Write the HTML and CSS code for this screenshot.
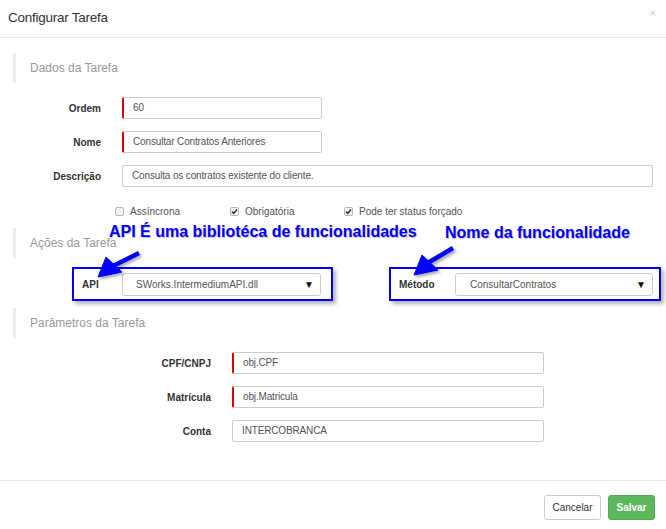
FILE: index.html
```html
<!DOCTYPE html>
<html>
<head>
<meta charset="utf-8">
<link rel="stylesheet" href="styles.css">
</head>
<body>
<div class="modal">
  <div class="modal-header">
    <span class="title">Configurar Tarefa</span>
    <span class="close">×</span>
  </div>
  <div class="modal-body">
    <div class="section s1">Dados da Tarefa</div>
    <div class="row first">
      <label class="lbl">Ordem</label>
      <div class="input req short">60</div>
    </div>
    <div class="row">
      <label class="lbl">Nome</label>
      <div class="input req short">Consultar Contratos Anteriores</div>
    </div>
    <div class="row">
      <label class="lbl">Descrição</label>
      <div class="input long">Consulta os contratos existente do cliente.</div>
    </div>
    <div class="checks">
      <span class="chk"><span class="box"></span>Assíncrona</span>
      <span class="chk c2"><span class="box on"><svg viewBox="0 0 9 9" width="9" height="9"><path d="M2 4.6 L3.8 6.4 L7 2.6" fill="none" stroke="#333" stroke-width="1.5"/></svg></span>Obrigatória</span>
      <span class="chk c3"><span class="box on"><svg viewBox="0 0 9 9" width="9" height="9"><path d="M2 4.6 L3.8 6.4 L7 2.6" fill="none" stroke="#333" stroke-width="1.5"/></svg></span>Pode ter status forçado</span>
    </div>
    <div class="section s2">Ações da Tarefa</div>
    <div class="boxes">
      <div class="hl hl1">
        <label class="blbl">API</label>
        <div class="select sel1"><span>SWorks.IntermediumAPI.dll</span><span class="caret">▼</span></div>
      </div>
      <div class="hl hl2">
        <label class="blbl">Método</label>
        <div class="select sel2"><span>ConsultarContratos</span><span class="caret">▼</span></div>
      </div>
    </div>
    <div class="section s3">Parâmetros da Tarefa</div>
    <div class="row prow first2">
      <label class="lbl plbl">CPF/CNPJ</label>
      <div class="input req mid">obj.CPF</div>
    </div>
    <div class="row prow">
      <label class="lbl plbl">Matrícula</label>
      <div class="input req mid">obj.Matricula</div>
    </div>
    <div class="row prow">
      <label class="lbl plbl">Conta</label>
      <div class="input mid">INTERCOBRANCA</div>
    </div>

    <div class="note n1">API É uma bibliotéca de funcionalidades</div>
    <div class="note n2">Nome da funcionalidade</div>
    <svg class="arrows" width="666" height="529" viewBox="0 0 666 529">
      <defs>
        <filter id="sh" x="-50%" y="-50%" width="200%" height="200%">
          <feDropShadow dx="2" dy="2" stdDeviation="1.5" flood-color="#000" flood-opacity="0.35"/>
        </filter>
      </defs>
      <g filter="url(#sh)" fill="#0000ff" stroke="#0000ff">
        <line x1="139" y1="253" x2="111" y2="267" stroke-width="4.5"/>
        <polygon points="98,277 106,257 122,272" stroke-width="1"/>
        <line x1="453" y1="248" x2="426" y2="264" stroke-width="4.5"/>
        <polygon points="414,275 422,255 438,270" stroke-width="1"/>
      </g>
    </svg>
  </div>
  <div class="modal-footer">
    <button class="btn cancel">Cancelar</button>
    <button class="btn save">Salvar</button>
  </div>
</div>
</body>
</html>
```
FILE: styles.css
```css
* { box-sizing: border-box; }
html, body { margin: 0; padding: 0; background: #fff; }
body { font-family: "Liberation Sans", Arial, sans-serif; color: #333; width: 666px; height: 529px; overflow: hidden; }
.modal { width: 666px; height: 529px; display: flex; flex-direction: column; }
.modal-header { height: 38px; border-bottom: 1px solid #e5e5e5; display: flex; align-items: center; justify-content: space-between; padding: 0 10px 3px 8px; }
.title { font-family: "Liberation Sans", Arial, sans-serif; font-size: 13.5px; letter-spacing: -0.25px; color: #333; }
.close { font-size: 11px; color: #c8c8c8; margin-top: -8px; }
.modal-body { position: relative; height: 442px; padding: 0 13px; display: flex; flex-direction: column; }
.section { height: 30px; line-height: 30px; border-left: 3px solid #eee; padding-left: 14px; font-size: 12px; color: #999; }
.s1 { margin-top: 15px; }
.s2 { margin-top: 11px; }
.s3 { margin-top: 7px; }
.row { display: flex; align-items: center; height: 22px; margin-top: 12px; }
.row.first { margin-top: 14px; }
.row.first2 { margin-top: 14px; }
.lbl { width: 109px; padding-right: 21px; text-align: right; font-size: 10px; font-weight: bold; color: #333; }
.plbl { width: 219px; }
.input { height: 22px; border: 1px solid #ccc; border-radius: 2px; font-size: 10px; letter-spacing: -0.15px; color: #555; padding: 0 9px; line-height: 20px; }
.input.req { border-left: 2px solid #d00; }
.short { width: 200px; }
.long { width: 531px; }
.mid { width: 312px; }
.checks { position: relative; height: 12px; margin-top: 18px; font-size: 10px; color: #555; }
.chk { position: absolute; top: 0; display: flex; align-items: center; height: 12px; }
.chk { left: 102px; }
.chk.c2 { left: 217px; }
.chk.c3 { left: 331px; }
.box { width: 9px; height: 9px; border: 1px solid #b5b5b5; border-radius: 2px; background: #f2f2f2; margin-right: 6px; display: inline-flex; }
.box svg { margin: -1px; }
.boxes { height: 34px; margin-top: 9px; display: flex; }
.hl { flex-shrink: 0; border: 2px solid #0000ff; height: 34px; display: flex; align-items: center; box-shadow: 3px 3px 4px rgba(0,0,0,0.3); }
.hl1 { margin-left: 59px; width: 261px; padding-left: 8px; }
.hl2 { margin-left: 56px; width: 272px; padding-left: 8px; }
.blbl { flex-shrink: 0; font-size: 10px; font-weight: bold; color: #333; }
.hl1 .blbl { width: 40px; }
.hl2 .blbl { width: 56px; }
.select { flex-shrink: 0; height: 23px; border: 1px solid #ccc; border-radius: 3px; display: flex; align-items: center; justify-content: space-between; padding: 0 6px 0 13px; font-size: 10px; color: #555; }
.sel1 { width: 199px; }
.sel2 { width: 198px; padding-left: 14px; }
.caret { font-size: 10px; color: #111; }
.note { position: absolute; font-weight: bold; font-size: 16px; color: #0000ff; text-shadow: 1px 1px 1px rgba(0,0,0,0.25); white-space: nowrap; }
.n1 { left: 109px; top: 185px; }
.n2 { left: 445px; top: 186px; }
.arrows { position: absolute; left: 0; top: -38px; pointer-events: none; }
.modal-footer { border-top: 1px solid #e5e5e5; flex: 1; display: flex; justify-content: flex-end; align-items: flex-start; padding: 14px 11px 0 0; gap: 7px; }
.btn { height: 25px; border-radius: 3px; font-family: "Liberation Sans", Arial, sans-serif; font-size: 10px; padding: 0; }
.cancel { width: 57px; background: #fff; border: 1px solid #ccc; color: #333; }
.save { width: 47px; background: #5cb85c; border: 1px solid #4cae4c; color: #fff; font-weight: bold; }
```
